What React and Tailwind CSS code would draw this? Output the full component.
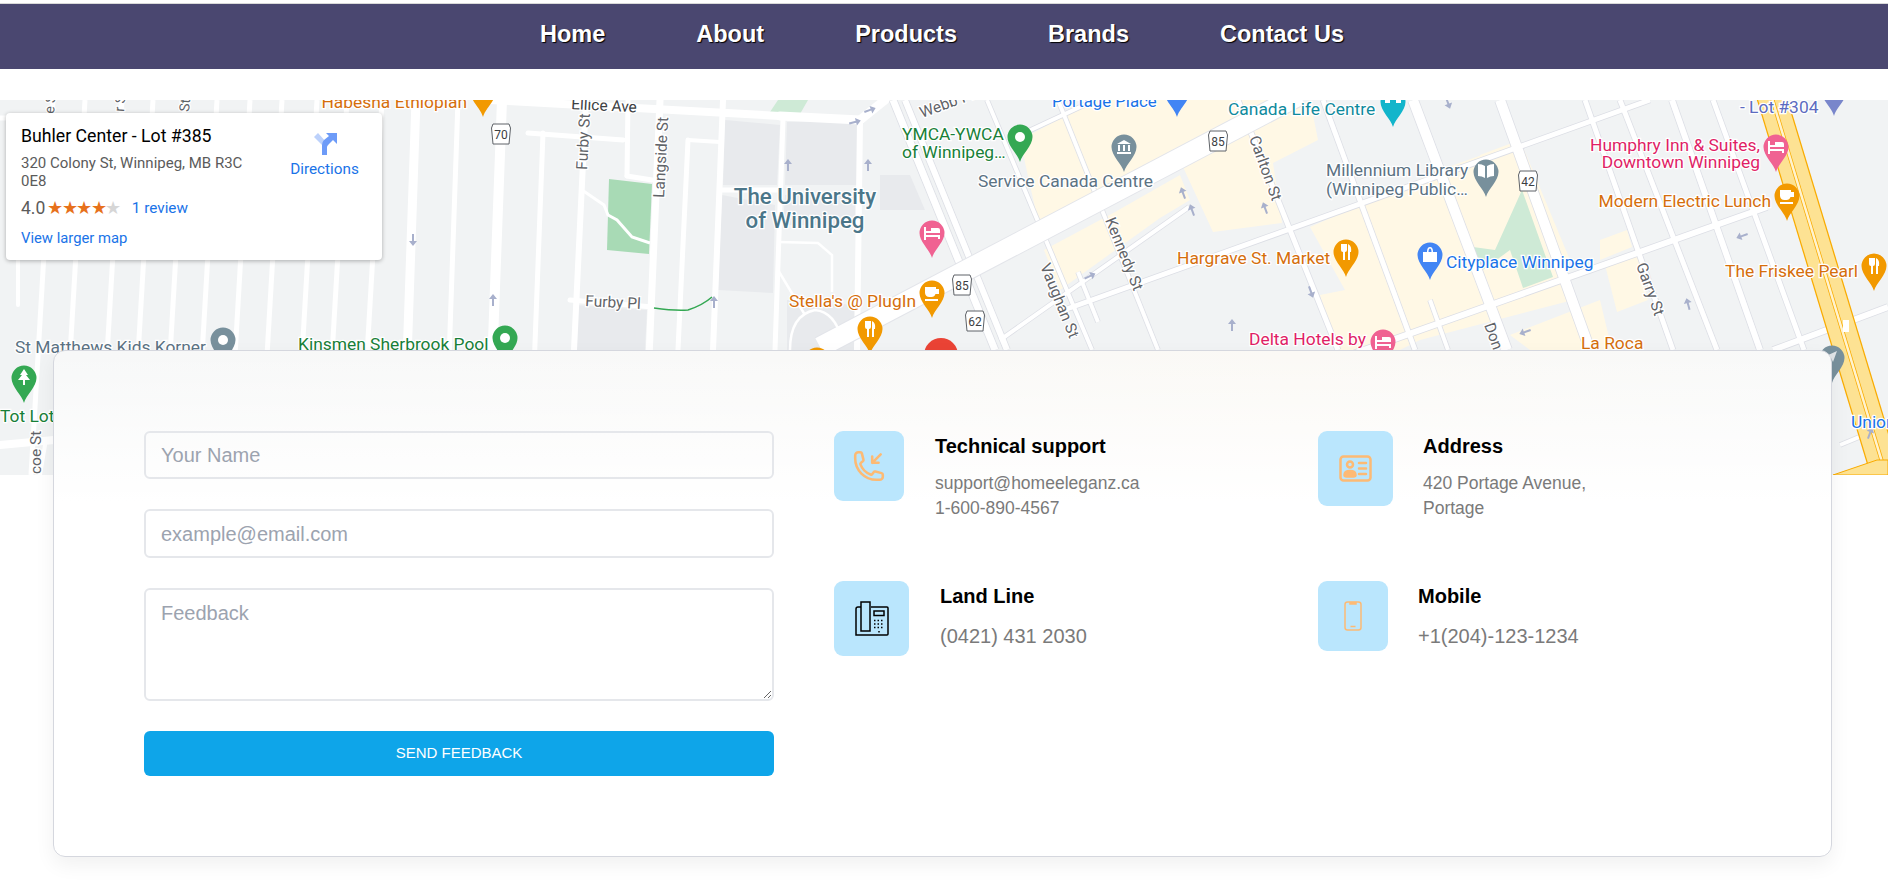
import React from "react";
import { HiOutlinePhoneArrowDownLeft } from "react-icons/hi2";

const navLinks = ["Home", "About", "Products", "Brands", "Contact Us"];

// white streets on the map: [x1, y1, x2, y2, width]
const streets = [
  [416, 0, 403, 375, 9], [458, 0, 445, 375, 5], [502, 0, 488, 375, 10], [543, 33, 530, 375, 5],
  [528, 33, 623, 40, 5], [586, 0, 568, 375, 6], [628, 0, 627, 76, 5], [627, 76, 652, 80, 5],
  [660, 0, 644, 375, 7], [688, 40, 672, 375, 5], [688, 40, 720, 42, 4], [723, 0, 708, 375, 6],
  [490, 0, 780, 16, 8], [780, 16, 860, 20, 9], [860, 20, 885, 0, 9], [783, 20, 775, 250, 5],
  [860, 20, 857, 250, 6], [570, 200, 653, 207, 5], [722, 90, 778, 90, 5],
  [0, 18, 18, 18, 5], [18, 18, 18, 205, 4], [0, 345, 54, 340, 8], [40, 375, 45, 345, 4],
];
// downtown streets, these get a thin grey casing
const cityStreets = [
  [893, 0, 995, 250, 7], [905, 0, 1007, 250, 6],
  [987, 0, 1092, 250, 4], [1058, 0, 1158, 250, 4], [1238, 0, 1338, 250, 5], [1323, 0, 1415, 250, 5],
  [1413, 0, 1507, 250, 10], [1500, 0, 1590, 250, 10], [1585, 0, 1673, 250, 5], [1620, 0, 1717, 250, 5],
  [1672, 0, 1760, 250, 6], [1713, 0, 1804, 250, 5],
  [1064, 210, 1650, 0, 5], [1000, 240, 1189, 107, 4], [1330, 262, 1767, 107, 6], [1773, 250, 1888, 207, 6],
  [1020, 35, 1095, 0, 4], [1840, 345, 1888, 325, 4], [1078, 172, 1098, 222, 4], [1430, 200, 1448, 250, 4],
];
// slightly slanted side streets in the residential blocks on the left
const sideStreets = [43, 75, 112, 143, 175, 207, 240, 272, 307, 337, 372];

const buildings = [
  "725,20 780,25 777,85 723,85", "787,22 857,20 857,85 785,85", "722,95 775,105 773,193 718,190",
  "575,205 647,210 645,250 573,250", "785,95 855,95 855,125 783,125", "880,75 910,75 925,110 880,110",
  "787,200 855,205 855,250 787,250",
];
const beige = [
  "1020,40 1095,0 1290,0 1040,130", "1044,150 1115,112 1180,75 1190,100 1160,118 1060,190",
  "1183,67 1240,35 1310,0 1318,40 1273,63 1282,123 1213,132",
  "1310,127 1440,70 1510,45 1573,200 1420,240 1400,250 1335,250 1320,195 1345,190",
  "1480,55 1520,40 1570,160 1530,190", "1600,140 1627,130 1632,147 1600,160", "1605,165 1637,155 1648,200 1617,212",
  "1510,235 1600,200 1612,250 1530,250",
];

const Pin = ({ x, y, color, kind = "dot" }) => (
  <g transform={`translate(${x} ${y})`}>
    <path d="M0 25 C-2 17 -12.5 9 -12.5 0 A12.5 12.5 0 1 1 12.5 0 C12.5 9 2 17 0 25Z" fill={color} />
    {kind === "dot" && <circle r="5" fill="#fff" />}
    {kind === "fork" && <path d="M-5 -8v6q0 2 2 2v8h2v-8q2 0 2-2v-6M2 -8q4 2 3 8h-1v8h-2z" fill="#fff" />}
    {kind === "cup" && <path d="M-7 -6h11v2h3v5h-3.500q-1 3-4 3h-2q-4 0-4.500-4zM-7 6h13v2h-13z" fill="#fff" />}
    {kind === "bed" && <path d="M-8 -6h2v6h14v-3q0-2-2-2h-7v4h5v-1h-10v9h-2zM-8 2h16v4h-2v-2h-12v2h-2z" fill="#fff" />}
    {kind === "bank" && <path d="M-7 -3l7-4 7 4zM-6 -2h2v6h-2zM-1 -2h2v6h-2zM4 -2h2v6h-2zM-7 5h14v2h-14z" fill="#fff" />}
    {kind === "book" && <path d="M-1 -6q-3-2-7-2v12q4 0 7 2zM1 -6q3-2 7-2v12q-4 0-7 2z" fill="#fff" />}
    {kind === "bag" && <path d="M-7 -3h14v10h-14zM-3 -3q0-5 3-5t3 5h-1.500q0-3.500-1.500-3.500t-1.500 3.500z" fill="#fff" />}
    {kind === "tree" && <path d="M0 -9l4 6h-2l4 5h-5v5h-2v-5h-5l4-5h-2z" fill="#fff" />}
    {kind === "venue" && <path d="M-8 -9h4v4h2v-4h4v4h2v-4h4v10h-5v-3h-6v3h-5z" fill="#fff" />}
    {kind === "transit" && <path d="M-6 -2l11-5-4 11-2-4z" fill="#dfe3e6" />}
  </g>
);

// hwy shield with the route number
const Shield = ({ x, y, n }) => (
  <g transform={`translate(${x} ${y})`}>
    <path d="M-8 -11h16l1.500 4-1.500 16h-16l-1.500-16z" fill="#fff" stroke="#5f6368" strokeWidth="1" />
    <text textAnchor="middle" y="4" fontSize="12" fill="#3c4043" fontFamily="Roboto, sans-serif">{n}</text>
  </g>
);

const Arrow = ({ x, y, r = 0 }) => (
  <path transform={`translate(${x} ${y}) rotate(${r})`} d="M0 -6l4 5h-3v7h-2v-7h-3z" fill="#a8b0cc" />
);

// one label on the map; halo the same way google does it
const Label = ({ x, y, color, size = 17.4, anchor = "start", weight = 400, rotate, children }) => (
  <text
    x={x}
    y={y}
    fill={color}
    fontSize={size}
    fontWeight={weight}
    textAnchor={anchor}
    fontFamily="Roboto, sans-serif"
    stroke="#fff"
    strokeWidth="2.5"
    paintOrder="stroke"
    transform={rotate !== undefined ? `rotate(${rotate} ${x} ${y})` : undefined}
  >
    {children}
  </text>
);

const ORANGE = "#d56e0c";
const GREEN = "#188038";
const BLUE = "#1a73e8";
const PINK = "#e01e66";
const SLATE = "#5b7283";
const STREET = "#5f6368";

const MapDrawing = () => (
  <svg viewBox="0 0 1888 375" className="block h-full w-full" preserveAspectRatio="none">
    <rect width="1888" height="375" fill="#f1f3f4" />
    {beige.map((p) => <polygon key={p} points={p} fill="#fff8e5" />)}
    {buildings.map((p) => <polygon key={p} points={p} fill="#e8eaed" />)}
    <polygon points="609,79 652,84 649,154 607,150" fill="#a8dab5" />
    <polygon points="1522,90 1553,177 1523,188 1510,150 1480,172 1473,147 1495,150" fill="#ceead6" />
    <polygon points="778,0 808,0 800,14 770,12" fill="#ceead6" />

    {sideStreets.map((x) => (
      <line key={x} x1={x + 10} y1="0" x2={x - 12} y2="375" stroke="#fff" strokeWidth="5" />
    ))}
    {streets.map(([x1, y1, x2, y2, w]) => (
      <line key={`${x1}-${y1}-${x2}-${y2}`} x1={x1} y1={y1} x2={x2} y2={y2} stroke="#fff" strokeWidth={w} strokeLinecap="round" />
    ))}
    {cityStreets.map(([x1, y1, x2, y2, w]) => (
      <line key={`c-${x1}-${y1}-${x2}-${y2}`} x1={x1} y1={y1} x2={x2} y2={y2} stroke="#dcdee5" strokeWidth={w + 1.5} />
    ))}
    {cityStreets.map(([x1, y1, x2, y2, w]) => (
      <line key={`${x1}-${y1}-${x2}-${y2}`} x1={x1} y1={y1} x2={x2} y2={y2} stroke="#fff" strokeWidth={w} />
    ))}
    {/* portage ave */}
    <line x1="820" y1="247" x2="1300" y2="-5" stroke="#e3e5ea" strokeWidth="22" />
    <line x1="820" y1="247" x2="1300" y2="-5" stroke="#fff" strokeWidth="20" />

    {/* campus paths and the bit of green line */}
    <path d="M582 90L604 105L608 115L617 120L632 137L650 143" fill="none" stroke="#fff" strokeWidth="3" />
    <path d="M778 142L818 143L832 155V192M778 170L805 215M790 250Q790 215 815 210Q835 212 842 240" fill="none" stroke="#fff" strokeWidth="2.500" />
    <path d="M654 208Q675 211 688 210Q703 205 712 197" fill="none" stroke="#34a853" strokeWidth="1.500" />

    {/* highway */}
    <line x1="1771" y1="-5" x2="1892" y2="395" stroke="#f9ab00" strokeWidth="30" />
    <line x1="1771" y1="-5" x2="1892" y2="395" stroke="#fde293" strokeWidth="27.500" />
    <line x1="1771" y1="-5" x2="1892" y2="395" stroke="#f9ab00" strokeWidth="4" />
    <line x1="1771" y1="-5" x2="1892" y2="395" stroke="#fff3cf" strokeWidth="2.500" />
    <polygon points="1833,375 1877,360 1888,360 1888,375" fill="#fde293" stroke="#f9ab00" />
    <rect x="1843" y="220" width="6" height="12" fill="#fff" />

    {[[413, 140, 180], [493, 200, 0], [788, 65, 0], [714, 202, 0], [868, 65, 0], [855, 22, 75], [870, 10, 70], [1183, 93, -20], [1192, 110, -20],
      [1090, 176, 65], [1232, 225, 0], [1265, 108, -20], [1311, 192, 160], [1229, 307, -20], [1448, 3, 160], [1688, 204, -15], [1650, 270, 160], [1741, 303, -20], [1742, 136, -110], [1525, 232, -110], [1446, 320, -110], [1870, 333, 20]].map(([x, y, r]) => (
      <Arrow key={`${x}-${y}`} x={x} y={y} r={r} />
    ))}

    <Shield x={501} y={35} n="70" />
    <Shield x={962} y={186} n="85" />
    <Shield x={975} y={222} n="62" />
    <Shield x={1218} y={42} n="85" />
    <Shield x={1528} y={82} n="42" />

    <Label x={54} y={14} color={STREET} size={14} rotate={-85}>e St</Label>
    <Label x={124} y={12} color={STREET} size={14} rotate={-85}>r St</Label>
    <Label x={189} y={12} color={STREET} size={14} rotate={-85}>St</Label>
    <Label x={41} y={374} color={STREET} size={15.5} rotate={-90}>coe St</Label>
    <Label x={571} y={9} color="#3c4043" size={15.5} rotate={3}>Ellice Ave</Label>
    <Label x={587} y={70} color={STREET} size={15.5} rotate={-87}>Furby St</Label>
    <Label x={664} y={98} color={STREET} size={15.5} rotate={-87}>Langside St</Label>
    <Label x={585} y={206} color={STREET} size={15.5} rotate={3}>Furby Pl</Label>
    <Label x={922} y={18} color={STREET} size={15.5} rotate={-20}>Webb Pl</Label>
    <Label x={1040} y={166} color={STREET} size={15.5} rotate={68}>Vaughan St</Label>
    <Label x={1105} y={120} color={STREET} size={15.5} rotate={68}>Kennedy St</Label>
    <Label x={1249} y={38} color={STREET} size={15.5} rotate={70}>Carlton St</Label>
    <Label x={1484} y={225} color={STREET} size={15.5} rotate={70}>Donald St</Label>
    <Label x={1636} y={165} color={STREET} size={15.5} rotate={70}>Garry St</Label>

    <Label x={805} y={104} color="#4b7689" size={22.3} weight={500} anchor="middle">The University</Label>
    <Label x={805} y={128} color="#4b7689" size={22.3} weight={500} anchor="middle">of Winnipeg</Label>

    <Label x={467} y={8} color={ORANGE} anchor="end">Habesha Ethiopian</Label>
    <Pin x={483} y={-8} color="#f29900" kind="fork" />
    <Label x={15} y={253} color={SLATE}>St Matthews Kids Korner</Label>
    <Pin x={223} y={240} color="#78909c" />
    <Label x={298} y={250} color={GREEN}>Kinsmen Sherbrook Pool</Label>
    <Pin x={505} y={238} color="#34a853" />
    <Label x={0} y={322} color={GREEN}>Tot Lot</Label>
    <Pin x={24} y={278} color="#34a853" kind="tree" />

    <Label x={902} y={40} color={GREEN}>YMCA-YWCA</Label>
    <Label x={902} y={58} color={GREEN}>of Winnipeg…</Label>
    <Pin x={1020} y={37} color="#34a853" />
    <Label x={978} y={87} color={SLATE}>Service Canada Centre</Label>
    <Pin x={1124} y={47} color="#78909c" kind="bank" />
    <Pin x={932} y={133} color="#f06292" kind="bed" />
    <Label x={916} y={207} color={ORANGE} anchor="end">Stella's @ PlugIn</Label>
    <Pin x={932} y={193} color="#f29900" kind="cup" />
    <Pin x={870} y={229} color="#f29900" kind="fork" />
    <Pin x={817} y={260} color="#f29900" kind="fork" />
    <circle cx="941" cy="255" r="17" fill="#ea4335" />
    <Label x={1052} y={7} color={BLUE} size={16.8}>Portage Place</Label>
    <Pin x={1177} y={-8} color="#4285f4" kind="bag" />
    <Label x={1228} y={15} color="#0f8a9d">Canada Life Centre</Label>
    <Pin x={1393} y={2} color="#12b5cb" kind="venue" />
    <Label x={1326} y={76} color={SLATE}>Millennium Library</Label>
    <Label x={1326} y={95} color={SLATE}>(Winnipeg Public…</Label>
    <Pin x={1486} y={72} color="#78909c" kind="book" />
    <Label x={1177} y={164} color={ORANGE}>Hargrave St. Market</Label>
    <Pin x={1346} y={152} color="#f29900" kind="fork" />
    <Label x={1446} y={168} color={BLUE}>Cityplace Winnipeg</Label>
    <Pin x={1430} y={155} color="#4285f4" kind="bag" />
    <Label x={1249} y={245} color={PINK}>Delta Hotels by</Label>
    <Pin x={1383} y={242} color="#f06292" kind="bed" />
    <Label x={1581} y={249} color={ORANGE}>La Roca</Label>
    <Label x={1760} y={51} color={PINK} anchor="end">Humphry Inn &amp; Suites,</Label>
    <Label x={1760} y={68} color={PINK} anchor="end">Downtown Winnipeg</Label>
    <Pin x={1776} y={47} color="#f06292" kind="bed" />
    <Label x={1771} y={107} color={ORANGE} anchor="end">Modern Electric Lunch</Label>
    <Pin x={1787} y={96} color="#f29900" kind="cup" />
    <Label x={1725} y={177} color={ORANGE}>The Friskee Pearl</Label>
    <Pin x={1874} y={166} color="#f29900" kind="fork" />
    <Label x={1740} y={13} color="#5c6bc0">- Lot #304</Label>
    <Pin x={1834} y={-9} color="#7986cb" />
    <Pin x={1832} y={258} color="#78909c" kind="transit" />
    <Label x={1851} y={328} color={BLUE}>Union</Label>
  </svg>
);

const InfoWindow = () => (
  <div className="absolute left-[6px] top-[13px] flex h-[147px] w-[376px] justify-between rounded-sm bg-white pl-[15px] pr-[24px] pt-[11px] font-['Roboto',sans-serif] shadow-[0_1px_4px_rgba(0,0,0,0.3)]">
    <div className="w-[232px]">
      <div className="text-[17.700px] leading-[24px] text-black">Buhler Center - Lot #385</div>
      <div className="mt-[6px] text-[15px] leading-[18px] text-[#5b5b5b]">320 Colony St, Winnipeg, MB R3C 0E8</div>
      <div className="mt-[6px] flex items-center">
        <span className="text-[17.500px] leading-[24px] text-[#5b5b5b]">4.0</span>
        <span className="ml-[2px] text-[18px] leading-[24px] tracking-[-1.500px] text-[#e7711b]">★★★★<span className="text-[#d6d6d6]">★</span></span>
        <span className="ml-[12px] text-[15.300px] text-[#1a73e8]">1 review</span>
      </div>
      <div className="mt-[6px] text-[14.800px] leading-[24px] text-[#1a73e8]">View larger map</div>
    </div>
    <div className="flex w-[67px] flex-col items-center pt-[7px]">
      <svg width="26" height="26" viewBox="0 0 26 26">
        <path d="M2 6L6 2L15 12V24H10V14Z" fill="#bcd1fb" />
        <path d="M10 24V14Q10 11 12 9L17 5L14 2H25V13L21 9L17 13Q15 15 15 16V24Z" fill="#6d9bf8" />
      </svg>
      <span className="mt-[2px] text-[15.300px] leading-[20px] text-[#1a73e8]">Directions</span>
    </div>
  </div>
);

const IdIcon = () => (
  <svg width="33" height="27" viewBox="0 0 33 27" fill="none" stroke="#fdba74" strokeWidth="2.500">
    <rect x="1.500" y="1.500" width="30" height="24" rx="3" />
    <circle cx="11" cy="9.500" r="3" />
    <path d="M5.500 20q0-4 5.500-4t5.500 4q0 1.500-2 1.500h-7q-2 0-2-1.500z" fill="#fdba74" />
    <path d="M20 8h7M20 13.500h7M20 19h7" strokeLinecap="round" />
  </svg>
);

const MobileIcon = () => (
  <svg width="18" height="30" viewBox="0 0 18 30" fill="none" stroke="#fdba74" strokeWidth="1.500">
    <rect x="1" y="1" width="16" height="28" rx="2.500" />
    <path d="M6 1.500h6v1.500h-6zM6.500 25.500h5" />
  </svg>
);

const LandlineIcon = () => (
  <svg width="34" height="36" viewBox="0 0 34 36" fill="none" stroke="#000" strokeWidth="1.500">
    <path d="M6 6H3a2 2 0 0 0-2 2v26h31a1 1 0 0 0 1-1V7a1 1 0 0 0-1-1H16" />
    <rect x="6" y="1" width="9" height="29" />
    <rect x="19" y="10" width="10" height="4.500" />
    <path d="M19 19.500h10M19 23h10M19 26.500h10M24 30v1.500" strokeDasharray="1.500 2" strokeWidth="1.500" />
  </svg>
);

const Tile = ({ size, children }) => (
  <div className={`flex shrink-0 items-center justify-center rounded-[9px] bg-[#bae6fd] ${size}`}>{children}</div>
);

const ContactForm = () => (
  <form className="flex w-[630px] shrink-0 flex-col gap-[30px] font-['Liberation_Sans',Arial,sans-serif]">
    <input placeholder="Your Name" className="h-[48px] rounded-md border-2 border-[#e5e7eb] bg-transparent px-[15px] text-[20px] outline-none placeholder:text-[#9ca3af]" />
    <input placeholder="example@email.com" className="h-[49px] rounded-md border-2 border-[#e5e7eb] bg-transparent px-[15px] pt-[2px] text-[20px] outline-none placeholder:text-[#9ca3af]" />
    <textarea placeholder="Feedback" className="h-[113px] rounded-md border-2 border-[#e5e7eb] bg-transparent px-[15px] py-[9px] text-[20px] leading-[28px] outline-none placeholder:text-[#9ca3af]" />
    <button type="button" className="h-[45px] rounded-md bg-[#0ea5e9] text-[15px] text-white">SEND FEEDBACK</button>
  </form>
);

const ContactInfo = () => (
  <div className="ml-[60px] grid w-[968px] grid-cols-2 grid-rows-[150px_150px] font-['Liberation_Sans',Arial,sans-serif]">
    <div className="flex items-start gap-[31px]">
      <Tile size="h-[70px] w-[70px]"><HiOutlinePhoneArrowDownLeft strokeWidth={1.8} className="h-[34px] w-[34px] text-[#fdba74]" /></Tile>
      <div className="pt-px">
        <h3 className="text-[20px] font-bold leading-[28px] text-black">Technical support</h3>
        <p className="mt-[11px] text-[17.500px] leading-[25px] text-[#7a7a7a]">support@homeeleganz.ca<br />1-600-890-4567</p>
      </div>
    </div>
    <div className="flex items-start gap-[30px]">
      <Tile size="h-[75px] w-[75px]"><IdIcon /></Tile>
      <div className="pt-px">
        <h3 className="text-[20px] font-bold leading-[28px] text-black">Address</h3>
        <p className="mt-[11px] text-[17.500px] leading-[25px] text-[#7a7a7a]">420 Portage Avenue,<br />Portage</p>
      </div>
    </div>
    <div className="flex items-start gap-[31px]">
      <Tile size="h-[75px] w-[75px]"><LandlineIcon /></Tile>
      <div className="pt-px">
        <h3 className="text-[20px] font-bold leading-[28px] text-black">Land Line</h3>
        <p className="mt-[12px] text-[20px] leading-[28px] text-[#7a7a7a]">(0421) 431 2030</p>
      </div>
    </div>
    <div className="flex items-start gap-[30px]">
      <Tile size="h-[70px] w-[70px]"><MobileIcon /></Tile>
      <div className="pt-px">
        <h3 className="text-[20px] font-bold leading-[28px] text-black">Mobile</h3>
        <p className="mt-[12px] text-[20px] leading-[28px] text-[#7a7a7a]">+1(204)-123-1234</p>
      </div>
    </div>
  </div>
);

export default function App() {
  return (
    <div className="min-h-[886px] bg-white pt-[3px]">
      <nav className="flex h-[66px] items-center justify-center gap-[91px] border-t border-[#d9d9d9] bg-[#4a4770] pb-[3px] pr-[4px] font-['Liberation_Sans',Arial,sans-serif] text-[23.500px] font-bold text-white [text-shadow:1px_1px_1px_#000]">
        {navLinks.map((link) => (
          <a key={link} href="#">{link}</a>
        ))}
      </nav>

      {/* Map */}
      <section className="relative mt-[31px] h-[375px] overflow-hidden">
        <MapDrawing />
        <InfoWindow />
      </section>

      {/* Form card sits over the bottom of the map */}
      <section className="relative ml-[53px] mr-[56px] -mt-[125px] flex h-[507px] rounded-xl border border-[#d5d7de] bg-[linear-gradient(180deg,rgba(255,255,255,0)_0%,#ffffff_30%),linear-gradient(90deg,#f7f8f8_0%,#f9f9f8_40%,#fbf9f5_70%,#f8f9f9_100%)] pl-[90px] pt-[80px] shadow-[0_8px_20px_rgba(0,0,0,0.06)]">
        <ContactForm />
        <ContactInfo />
      </section>
    </div>
  );
}
